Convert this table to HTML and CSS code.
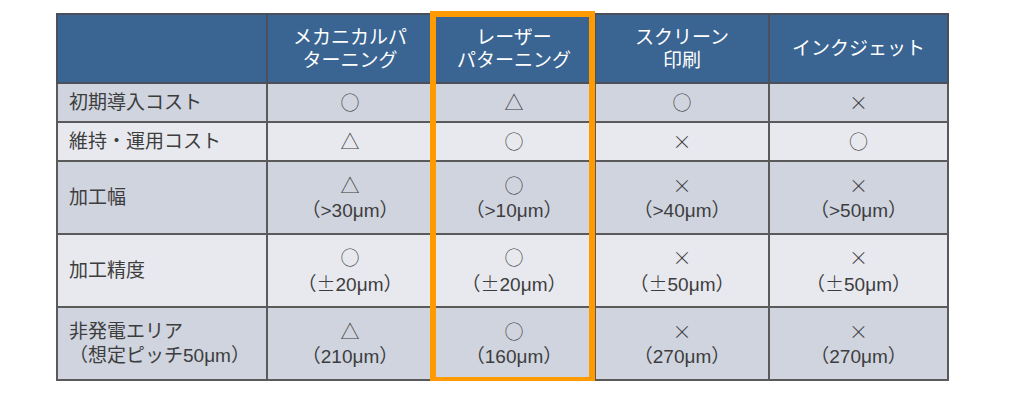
FILE: index.html
```html
<!DOCTYPE html>
<html lang="ja">
<head>
<meta charset="utf-8">
<link rel="stylesheet" href="styles.css">
</head>
<body>
<div class="wrap">
  <table class="cmp">
    <colgroup>
      <col class="c1"><col class="c2"><col class="c3"><col class="c4"><col class="c5">
    </colgroup>
    <thead>
      <tr class="head">
        <th></th>
        <th>メカニカルパ<br>ターニング</th>
        <th>レーザー<br>パターニング</th>
        <th>スクリーン<br>印刷</th>
        <th>インクジェット</th>
      </tr>
    </thead>
    <tbody>
      <tr class="dark r1">
        <td class="label">初期導入コスト</td>
        <td><span class="mk">○</span></td><td><span class="mk">△</span></td><td><span class="mk">○</span></td><td><span class="mk x">×</span></td>
      </tr>
      <tr class="light r1">
        <td class="label">維持・運用コスト</td>
        <td><span class="mk">△</span></td><td><span class="mk">○</span></td><td><span class="mk x">×</span></td><td><span class="mk">○</span></td>
      </tr>
      <tr class="dark r2">
        <td class="label">加工幅</td>
        <td><span class="mk">△</span><br>（&gt;30μm）</td><td><span class="mk">○</span><br>（&gt;10μm）</td><td><span class="mk x">×</span><br>（&gt;40μm）</td><td><span class="mk x">×</span><br>（&gt;50μm）</td>
      </tr>
      <tr class="light r2">
        <td class="label">加工精度</td>
        <td><span class="mk">○</span><br>（<span class="mk">±</span>20μm）</td><td><span class="mk">○</span><br>（<span class="mk">±</span>20μm）</td><td><span class="mk x">×</span><br>（<span class="mk">±</span>50μm）</td><td><span class="mk x">×</span><br>（<span class="mk">±</span>50μm）</td>
      </tr>
      <tr class="dark r2">
        <td class="label">非発電エリア<br>（想定ピッチ50μm）</td>
        <td><span class="mk">△</span><br>（210μm）</td><td><span class="mk">○</span><br>（160μm）</td><td><span class="mk x">×</span><br>（270μm）</td><td><span class="mk x">×</span><br>（270μm）</td>
      </tr>
    </tbody>
  </table>
  <div class="highlight"></div>
</div>
</body>
</html>
```

FILE: styles.css
```css
html, body {
  margin: 0;
  padding: 0;
  background: #ffffff;
}
body {
  font-family: "Liberation Sans", "Noto Sans CJK JP", sans-serif;
}
.wrap {
  position: relative;
  width: 891px;
  margin: 13px 0 0 56px;
}
.cmp {
  border-collapse: collapse;
  table-layout: fixed;
  width: 891px;
  color: #3d3d3d;
  font-size: 19px;
}
.c1 { width: 210px; }
.c2 { width: 166px; }
.c3 { width: 162px; }
.c4 { width: 174px; }
.c5 { width: 179px; }
.cmp th, .cmp td {
  border: 2px solid #5a5a5a;
  text-align: center;
  vertical-align: middle;
  padding: 0;
  line-height: 24px;
}
.head th {
  background: #3a6492;
  color: #ffffff;
  font-weight: normal;
  height: 67px;
  line-height: 23px;
  border-color: #4a4f5a;
}
.dark td { background: #cfd4df; }
.light td { background: #e8e9ef; }
.r1 td { height: 37px; }
.r2 td { height: 71px; }
.cmp td.label {
  text-align: left;
  padding-left: 11px;
}
.mk {
  font-family: "Noto Sans CJK JP", sans-serif;
  font-weight: 300;
}
.highlight {
  position: absolute;
  left: 374px;
  top: -2px;
  width: 165px;
  height: 372px;
  box-sizing: border-box;
  border: 6px solid #ff9a00;
  pointer-events: none;
}
```
